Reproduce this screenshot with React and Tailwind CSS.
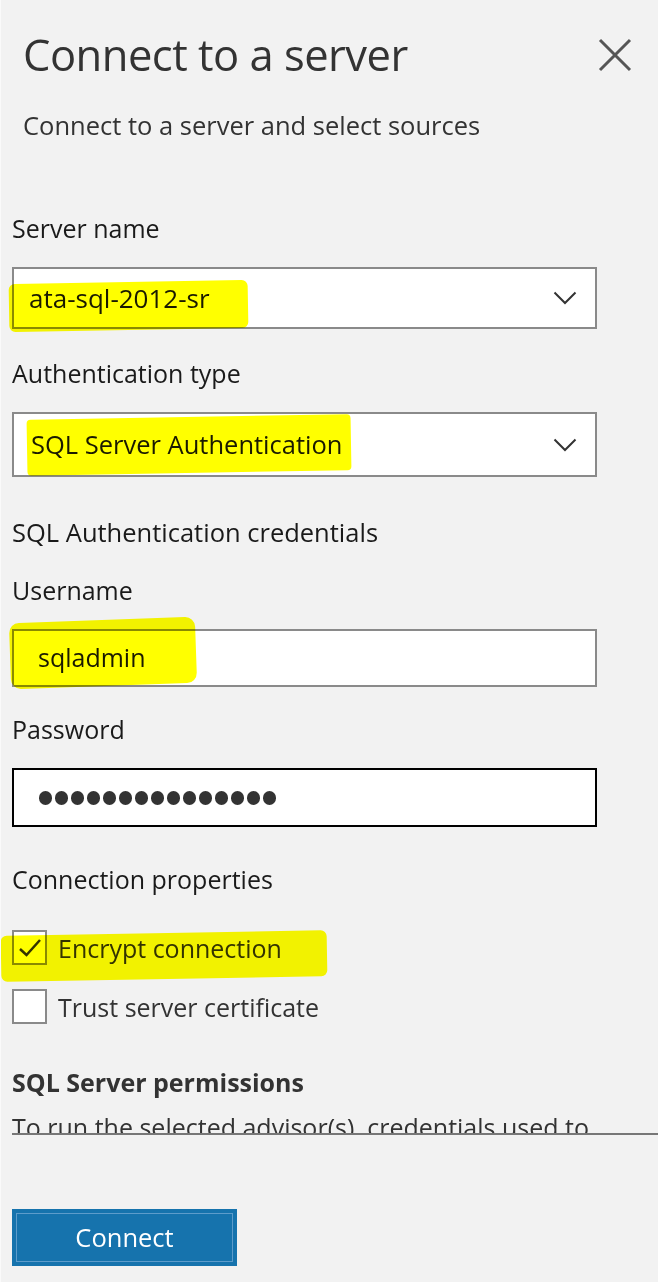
import React from "react";

function Chevron() {
  return (
    <svg width="24" height="14" viewBox="0 0 24 14" className="shrink-0">
      <path d="M1.5 1.5 L12 12 L22.5 1.5" fill="none" stroke="#333" strokeWidth="2" />
    </svg>
  );
}

function Highlight({ className }) {
  return <div className={"pointer-events-none absolute bg-[#ffff00] mix-blend-multiply " + className} />;
}

export default function App() {
  return (
    <div
      className="relative w-[658px] h-[1282px] overflow-hidden bg-[#f2f2f2] border-l border-[#fafafa] text-[#1a1a1a]"
      style={{ fontFamily: '"Open Sans", "Noto Sans", sans-serif' }}
    >
      {/* header */}
      <div className="flex items-start justify-between pl-[22px] pr-[26px] pt-[26px]">
        <h1 className="text-[43.5px] leading-[58px] text-[#333] font-normal tracking-[-0.5px]">Connect to a server</h1>
        <svg width="34" height="34" viewBox="0 0 34 34" className="mt-[12px]">
          <path d="M2 2 L32 32 M32 2 L2 32" stroke="#555" strokeWidth="3" fill="none" />
        </svg>
      </div>
      <p className="pl-[22px] mt-[26px] text-[25.5px] leading-[30px] text-[#333]">Connect to a server and select sources</p>

      {/* form */}
      <div className="pl-[11px] w-[596px]">
        <div className="mt-[73px] text-[25px] leading-[30px]">Server name</div>
        <div className="mt-[24px] h-[62px] bg-white border-2 border-[#8a8a8a] flex items-center justify-between pl-[15px] pr-[18px]">
          <span className="text-[26px]">ata-sql-2012-sr</span>
          <Chevron />
        </div>

        <div className="mt-[29px] text-[25px] leading-[30px]">Authentication type</div>
        <div className="mt-[24px] h-[65px] bg-white border-2 border-[#8a8a8a] flex items-center justify-between pl-[17px] pr-[18px]">
          <span className="text-[25.5px]">SQL Server Authentication</span>
          <Chevron />
        </div>

        <div className="mt-[40px] text-[25.5px] leading-[30px]">SQL Authentication credentials</div>
        <div className="mt-[28px] text-[25px] leading-[30px]">Username</div>
        <div className="mt-[24px] h-[58px] bg-white border-2 border-[#8a8a8a] flex items-center pl-[24px]">
          <span className="text-[25px]">sqladmin</span>
        </div>

        <div className="mt-[27px] text-[25px] leading-[30px]">Password</div>
        <div className="mt-[24px] h-[59px] bg-white border-2 border-black flex items-center pl-[25px] gap-[3px]">
          {Array.from({ length: 15 }).map((_, i) => (
            <span key={i} className="w-[13px] h-[14px] rounded-full bg-[#333] shrink-0" />
          ))}
        </div>

        <div className="mt-[37px] text-[25px] leading-[30px]">Connection properties</div>

        <div className="mt-[36px] flex items-center gap-[11px] h-[35px]">
          <div className="w-[35px] h-[35px] bg-white border-2 border-[#8a8a8a] shrink-0 flex items-center justify-center">
            <svg width="24" height="20" viewBox="0 0 24 20">
              <path d="M2 11 L8.5 17 L22 2" fill="none" stroke="#333" strokeWidth="2.5" />
            </svg>
          </div>
          <span className="text-[25px] leading-[30px] text-[#333]">Encrypt connection</span>
        </div>
        <div className="mt-[24px] flex items-center gap-[11px] h-[35px]">
          <div className="w-[35px] h-[35px] bg-white border-2 border-[#8a8a8a] shrink-0" />
          <span className="text-[25px] leading-[30px] text-[#333]">Trust server certificate</span>
        </div>

        <div className="mt-[43px] text-[25px] leading-[30px] font-bold text-[#333]">SQL Server permissions</div>
        <div className="mt-[15px] h-[21px] overflow-hidden">
          <p className="text-[25px] leading-[30px] text-[#333] whitespace-nowrap">To run the selected advisor(s), credentials used to</p>
        </div>
      </div>
      <div className="ml-[11px] h-[2px] bg-[#777]" />

      <div className="pl-[11px] mt-[74px]">
        <button className="w-[225px] h-[57px] bg-[#1673ad] p-[4px]">
          <div className="w-full h-full border border-[#5d9ccb] flex items-center justify-center text-white text-[25.5px]">
            Connect
          </div>
        </button>
      </div>

      {/* yellow annotation highlights */}
      <Highlight className="left-[8px] top-[282px] w-[239px] h-[48px] rounded-[6px] -rotate-[1deg]" />
      <Highlight className="left-[26px] top-[417px] w-[324px] h-[56px] rounded-[4px] -rotate-[1deg]" />
      <Highlight className="left-[9px] top-[620px] w-[186px] h-[66px] rounded-[10px] -rotate-[2deg]" />
      <Highlight className="left-[0px] top-[933px] w-[326px] h-[46px] rounded-[6px] -rotate-[1deg]" />
    </div>
  );
}
